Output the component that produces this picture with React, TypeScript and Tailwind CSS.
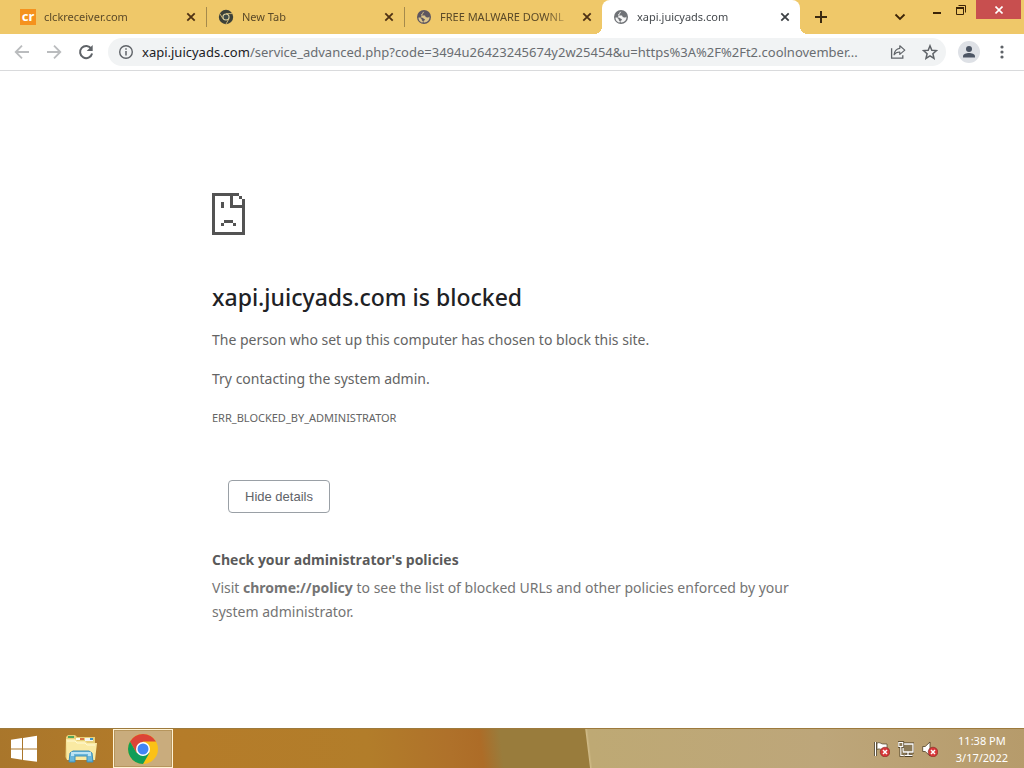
import React from "react";

function CloseIcon() {
  return (
    <svg width="16" height="16" viewBox="0 0 16 16" className="block">
      <path d="M4.3 4.3l7.4 7.4M11.7 4.3l-7.4 7.4" stroke="currentColor" strokeWidth="1.8" />
    </svg>
  );
}

function CrIcon() {
  return (
    <span className="flex h-4 w-4 shrink-0 justify-center bg-[#f5921e] text-[13px] leading-[14px] font-bold text-white">
      cr
    </span>
  );
}

function DarkChromeIcon() {
  return (
    <svg width="16" height="16" viewBox="0 0 16 16" className="block shrink-0">
      <circle cx="8" cy="8" r="7.2" fill="#3c4038" />
      <circle cx="8" cy="8" r="3.6" fill="#e3d7a8" />
      <circle cx="8" cy="8" r="2.5" fill="#3f4a48" />
      <path d="M8 4.6h6.3M5 9.8L1.8 4.6M11 9.8L8 15" stroke="#d9c07a" strokeWidth="0.9" />
    </svg>
  );
}

function GlobeIcon({ land, sea }: { land: string; sea: string }) {
  return (
    <svg width="16" height="16" viewBox="0 0 16 16" className="block shrink-0">
      <circle cx="8" cy="8" r="7" fill={land} />
      <path
        d="M8.4 2.3c-.6.7-1.8.6-1.9 1.6-.1.9-.8 1.2-1.4 1.5-.4.3.1 1 .8 1h2.6c.8 0 1 .6 1 1.2 0 .7.9.8 1.7.8h1.1c.6 0 .9-.4 1.2-.8A5.4 5.4 0 0 1 8.4 13.6c-.8 0-.9-.5-.9-1.1 0-.6.6-1 1.1-1.2.5-.3.4-1.1-.2-1.4L6 8.4H2.5C2.3 11 4.4 13.3 6.6 13.5L7 12.2c-.8-.2-1.3-.8-1.3-1.6 0-.8-.7-.9-1.3-1.5z"
        fill={sea}
      />
      <path d="M9.6 2.7l.3 1.5c.1.6.8.7 1.3.4l.9-.6A5.7 5.7 0 0 0 9.6 2.7z" fill={land} />
    </svg>
  );
}

type TabProps = { title: string; icon: React.ReactNode; active?: boolean; divider?: boolean };

function Tab({ title, icon, active, divider }: TabProps) {
  return (
    <div
      className={
        "relative flex h-[34px] w-[198px] min-w-0 items-center pr-[7px] " +
        (active ? "rounded-t-lg bg-white pl-[11px] text-[#45494d]" : "pl-3 text-[#5b4a28]")
      }
    >
      {active && (
        <>
          <span className="absolute bottom-0 -left-2 h-2 w-2 bg-[radial-gradient(circle_at_0_0,transparent_8px,white_8px)]" />
          <span className="absolute -right-2 bottom-0 h-2 w-2 bg-[radial-gradient(circle_at_100%_0,transparent_8px,white_8px)]" />
        </>
      )}
      <button className="flex min-w-0 flex-1 items-center gap-2 text-left">
        {icon}
        <span className="min-w-0 flex-1 overflow-hidden [mask-image:linear-gradient(to_right,black_80%,transparent_105%)] text-[11px] leading-4 whitespace-nowrap">
          {title}
        </span>
      </button>
      <button aria-label="Close tab" className={"ml-2 " + (active ? "text-[#3c4043]" : "text-[#4e3113]")}>
        <CloseIcon />
      </button>
      {divider && <span className="absolute -right-px h-5 w-px bg-[#a58a4c]" />}
    </div>
  );
}

function TabStrip() {
  return (
    <header className="flex h-[34px] bg-[#efc869] pl-2">
      <Tab title="clckreceiver.com" icon={<CrIcon />} divider />
      <Tab title="New Tab" icon={<DarkChromeIcon />} divider />
      <Tab title="FREE MALWARE DOWNL" icon={<GlobeIcon land="#5d5660" sea="#dcc58c" />} />
      <Tab title="xapi.juicyads.com" icon={<GlobeIcon land="#6f7276" sea="#f4f4f4" />} active />
      <button aria-label="New tab" className="ml-[11px] flex w-5 items-center justify-center text-[#3b2a10]">
        <svg width="14" height="14" viewBox="0 0 14 14">
          <path d="M7 1v12M1 7h12" stroke="currentColor" strokeWidth="2" />
        </svg>
      </button>
      <div className="ml-auto flex items-start text-[#3b2408]">
        <button aria-label="Search tabs" className="mr-3.5 flex h-[34px] w-7 items-center justify-center">
          <svg width="12" height="8" viewBox="0 0 12 8">
            <path d="M1.5 1.5L6 6l4.5-4.5" fill="none" stroke="currentColor" strokeWidth="1.8" />
          </svg>
        </button>
        <button aria-label="Minimize" className="flex h-[19px] w-[18px] items-center justify-center">
          <svg width="8" height="14" viewBox="0 0 8 14">
            <path d="M0 10h8" stroke="currentColor" strokeWidth="2" />
          </svg>
        </button>
        <button aria-label="Restore" className="flex h-[19px] w-[30px] items-center justify-center">
          <svg width="10" height="10" viewBox="0 0 10 10">
            <path d="M.5 2.5h7v7h-7zM2.5 .5h7v7" fill="none" stroke="currentColor" />
            <path d="M0 3h8" stroke="currentColor" strokeWidth="2" />
          </svg>
        </button>
        <button aria-label="Close window" className="mr-[3px] flex h-[19px] w-[45px] items-center justify-center bg-[#c84f4f] text-white">
          <svg width="8" height="8" viewBox="0 0 8 8">
            <path d="M.5 .5l7 7M7.5 .5l-7 7" stroke="currentColor" strokeWidth="1.6" />
          </svg>
        </button>
      </div>
    </header>
  );
}

function Toolbar() {
  return (
    <nav className="flex h-[37px] items-center border-b border-[#d9dadc] bg-white pl-3 text-[#5f6368]">
      <button aria-label="Back" className="flex w-5 justify-center text-[#babcbe]">
        <svg width="16" height="16" viewBox="0 0 16 16">
          <path d="M15 8H2M8 1.7L1.7 8 8 14.3" fill="none" stroke="currentColor" strokeWidth="1.8" />
        </svg>
      </button>
      <button aria-label="Forward" className="ml-3 flex w-5 justify-center text-[#babcbe]">
        <svg width="16" height="16" viewBox="0 0 16 16">
          <path d="M1 8h13M8 1.7L14.3 8 8 14.3" fill="none" stroke="currentColor" strokeWidth="1.8" />
        </svg>
      </button>
      <button aria-label="Reload" className="ml-3 flex w-5 justify-center">
        <svg width="16" height="16" viewBox="0 0 16 16">
          <path d="M13.3 4.7A6.1 6.1 0 1 0 14.1 9.5" fill="none" stroke="currentColor" strokeWidth="2" />
          <path d="M14.7 1v6H8.7z" fill="currentColor" />
        </svg>
      </button>
      <div className="ml-3 flex h-7 min-w-0 flex-1 items-center rounded-full bg-[#f1f3f4] pl-2.5">
        <button aria-label="View site information" className="shrink-0">
          <svg width="16" height="16" viewBox="0 0 16 16" className="block">
            <circle cx="8" cy="8" r="6.3" fill="none" stroke="currentColor" strokeWidth="1.4" />
            <path d="M8 7v4.5M8 4.3v1.5" stroke="currentColor" strokeWidth="1.5" />
          </svg>
        </button>
        <a
          href="#address"
          aria-label="Address"
          className="ml-2 min-w-0 flex-1 text-[13px] leading-5 whitespace-nowrap text-[#696d71]"
        >
          <span className="text-[#202124]">xapi.juicyads.com</span>
          /service_advanced.php?code=3494u26423245674y2w25454&u=https%3A%2F%2Ft2.coolnovember...
        </a>
        <button aria-label="Share this page" className="ml-3 shrink-0">
          <svg width="16" height="16" viewBox="0 0 16 16" className="block">
            <path d="M1.6 4.2v10h11.2v-3" fill="none" stroke="currentColor" strokeWidth="1.3" />
            <path
              d="M9.8 1.8l5 4.3-5 4.3V8C7 7.9 5.3 8.9 4.1 10.8 4.4 7.5 6.2 4.8 9.8 4.3z"
              fill="none"
              stroke="currentColor"
              strokeWidth="1.2"
              strokeLinejoin="round"
            />
          </svg>
        </button>
        <button aria-label="Bookmark this tab" className="mr-2 ml-4 shrink-0">
          <svg width="16" height="16" viewBox="0 0 16 16" className="block">
            <path
              d="M8 1.8l1.8 4.4 4.7.4-3.6 3.1 1.1 4.6L8 11.8l-4 2.5 1.1-4.6L1.5 6.6l4.7-.4z"
              fill="none"
              stroke="currentColor"
              strokeWidth="1.5"
            />
          </svg>
        </button>
      </div>
      <button aria-label="Profile" className="ml-3 flex h-[22px] w-[22px] items-center justify-center rounded-full bg-[#dee1e6] text-[#4c5564]">
        <svg width="14" height="14" viewBox="0 0 14 14">
          <circle cx="7" cy="4" r="3" fill="currentColor" />
          <path d="M1 12.5v-1.3C1 9.1 4.5 8 7 8s6 1.1 6 3.2v1.3z" fill="currentColor" />
        </svg>
      </button>
      <button aria-label="Menu" className="mr-3 ml-3 flex w-5 justify-center">
        <svg width="4" height="14" viewBox="0 0 4 14">
          <circle cx="2" cy="2" r="1.6" fill="currentColor" />
          <circle cx="2" cy="7" r="1.6" fill="currentColor" />
          <circle cx="2" cy="12" r="1.6" fill="currentColor" />
        </svg>
      </button>
    </nav>
  );
}

function SadPageIcon() {
  return (
    <svg width="33" height="42" viewBox="0 0 11 14" shapeRendering="crispEdges" fill="#535353" className="block">
      <path d="M0 0h9v1H1v12h9V2h1v12H0z" />
      <path d="M9 1h1v1H9zM6 1h1v3h3v1H6zM3 3h1v2H3zM4 9h3v1H4zM3 10h1v1H3zM7 10h1v1H7z" />
    </svg>
  );
}

function ErrorPage() {
  return (
    <main className="flex-1 bg-white px-6 pt-[122px] text-[#646464]">
      <div className="mx-auto w-full max-w-[600px]">
        <SadPageIcon />
        <h1 className="mt-[47px] text-[23px] leading-[30px] font-medium text-[#202124]">xapi.juicyads.com is blocked</h1>
        <p className="mt-4 text-[14px] leading-6">The person who set up this computer has chosen to block this site.</p>
        <p className="mt-[15px] text-[14px] leading-6">Try contacting the system admin.</p>
        <p className="mt-[15px] text-[11px] leading-6">ERR_BLOCKED_BY_ADMINISTRATOR</p>
        <button className="mt-[50px] ml-4 block h-[33px] rounded border border-[#9aa0a6] px-4 font-['Liberation_Sans',Arial,sans-serif] text-[13px] text-[#5f6368]">
          Hide details
        </button>
        <h2 className="mt-[35px] font-['Open_Sans',sans-serif] text-[14px] leading-6 font-bold text-[#5a5a5a]">
          Check your administrator's policies
        </h2>
        <p className="mt-1 text-[14px] leading-6 text-[#747474]">
          Visit <b>chrome://policy</b> to see the list of blocked URLs and other policies enforced by your system
          administrator.
        </p>
      </div>
    </main>
  );
}

function RedCross() {
  return (
    <g>
      <circle cx="11" cy="11" r="4.8" fill="#d8383a" stroke="#7d2622" strokeWidth=".6" />
      <path d="M9 9l4 4M13 9l-4 4" stroke="#fff" strokeWidth="1.5" />
    </g>
  );
}

function Taskbar() {
  return (
    <footer className="flex h-10 items-center border-t border-[#9d7a3d] bg-[linear-gradient(83deg,#a9762b_0%,#b57c29_18%,#b27d2a_36%,#af712a_44%,#ad6c27_47%,#997c3c_49%,#997c3c_57.3%,#d0bb88_57.4%,#bea974_57.6%,#bda67a_80%,#b69b6b_100%)]">
      <button aria-label="Start" className="flex w-12 justify-center">
        <svg width="28" height="28" viewBox="0 0 28 28">
          <path d="M1 4.8l11-1.7v10.3H1zM13 2.9L27 .8v12.6H13zM1 14.5h11v10.3L1 23.1zM13 14.5h14v12.3L13 24.9z" fill="#fff" />
        </svg>
      </button>
      <button aria-label="File Explorer" className="ml-4 flex w-[34px] justify-center">
        <svg width="34" height="30" viewBox="0 0 34 30">
          <path d="M2 3l2-2h7l2 2h18v20l-2 3H3L1.5 23z" fill="#e8cf78" />
          <path d="M4 2h6v2H4z" fill="#52a65b" />
          <path d="M12 4h8v2h-8z" fill="#fffdf0" />
          <path d="M21 4h8v3h-8z" fill="#f4f6f4" />
          <path d="M16 4h4v2h-4z" fill="#da7544" />
          <path d="M26 4h3v2h-3z" fill="#3b94c8" />
          <path d="M2 5h9l2 2h8l2 2h10l-2 17H3z" fill="#faeaa3" />
          <path d="M3 7h8l2 2h8l2 2h8" fill="none" stroke="#fff9d2" />
          <path d="M5 28l1-9 3-2h16l3 2 1 9h-6v-6H11v6z" fill="#69b6da" stroke="#3e8fb8" />
          <path d="M7 19h20M7 21h3M24 21h3" stroke="#d6f2fb" strokeWidth="1.5" />
        </svg>
      </button>
      <button aria-label="Google Chrome" className="ml-[15px] flex h-[39px] w-[60px] items-center justify-center border border-[#fff3d5] bg-[#c9ac7d] outline outline-1 -outline-offset-2 outline-[#b6955d]">
        <svg width="30" height="30" viewBox="0 0 30 30">
          <circle cx="15" cy="15" r="15" fill="#fbc116" />
          <path d="M2.01 7.5A15 15 0 0 1 27.99 7.5H15L8.5 18.75z" fill="#dc4437" />
          <path d="M2.01 7.5A15 15 0 0 0 15 30l6.5-11.25H8.5z" fill="#109d58" />
          <circle cx="15" cy="15" r="7" fill="#fff" />
          <circle cx="15" cy="15" r="5.5" fill="#4285f4" />
        </svg>
      </button>
      <div className="ml-auto flex items-center gap-2">
        <button aria-label="Action Center">
          <svg width="16" height="16" viewBox="0 0 16 16" className="block">
            <path d="M1.5 1v14" stroke="#4c3e24" strokeWidth="3" />
            <path d="M1.5 1v14" stroke="#fff" strokeWidth="1.3" />
            <path d="M3 2c3-1.5 4 1.5 7 1h3v6H9c-2 0-3-2-6-.6z" fill="#fff" stroke="#4c3e24" strokeWidth=".7" />
            <RedCross />
          </svg>
        </button>
        <button aria-label="Network">
          <svg width="16" height="16" viewBox="0 0 16 16" className="block">
            <path d="M5 3h10v8H5zM10 11v3M6.5 14.5h8" fill="none" stroke="#4c3e24" strokeWidth="3" />
            <path d="M5 3h10v8H5z" fill="#8b7a58" stroke="#fff" strokeWidth="1.3" />
            <path d="M10 11v3M6.5 14.3h8" stroke="#fff" strokeWidth="1.3" />
            <path d="M.8 1.5h4v4h-4zM2.8 5.5v9h3" fill="none" stroke="#4c3e24" strokeWidth="2.6" />
            <path d="M.8 1.5h4v4h-4zM2.8 5.5v9h3" fill="#8b7a58" stroke="#fff" strokeWidth="1.1" />
          </svg>
        </button>
        <button aria-label="Volume">
          <svg width="16" height="16" viewBox="0 0 16 16" className="block">
            <path d="M.7 5.5h2.5L8 1v14l-4.800-4.500H.7z" fill="#fff" stroke="#4c3e24" strokeWidth=".8" />
            <RedCross />
          </svg>
        </button>
      </div>
      <time className="mr-4 ml-[18px] flex flex-col text-center text-[11px] leading-[17px] text-white">
        <span>11:38 PM</span>
        <span>3/17/2022</span>
      </time>
    </footer>
  );
}

export default function App() {
  return (
    <div className="flex min-h-screen flex-col bg-white font-['Noto_Sans',sans-serif]">
      <TabStrip />
      <Toolbar />
      <ErrorPage />
      <Taskbar />
    </div>
  );
}
